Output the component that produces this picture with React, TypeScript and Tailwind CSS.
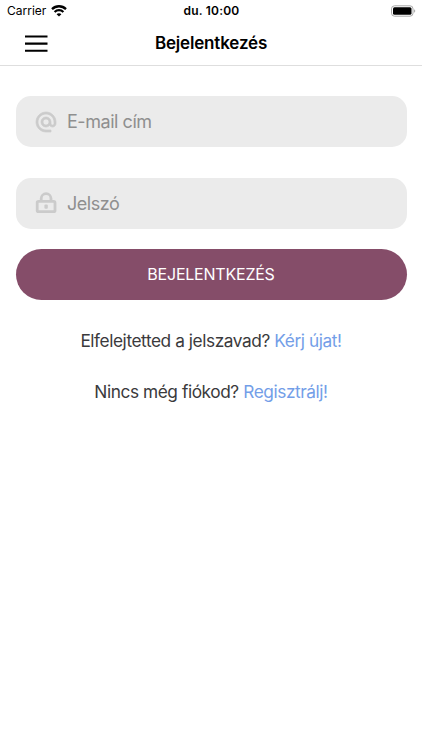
import type { ReactNode } from "react";

function StatusBar() {
  return (
    <div className="grid h-[22px] grid-cols-3 items-center pl-[7px] pr-[6px] text-[12px] leading-[22px]">
      <div className="flex items-center gap-[4.5px]">
        <span>Carrier</span>
        <svg width="16" height="12" viewBox="0 0 16 12" fill="none" stroke="black" strokeWidth="2.3">
          <path d="M1 4.1C4.9 .3 11.1 .3 15 4.1" />
          <path d="M3.6 7C6.1 4.6 9.9 4.6 12.4 7" />
          <path d="M8 11.6 5.6 9.2C6.9 8 9.1 8 10.4 9.2Z" fill="black" stroke="none" />
        </svg>
      </div>
      <span className="text-center font-semibold tracking-[0.2px]">du. 10:00</span>
      <svg className="justify-self-end" width="26" height="12" viewBox="0 0 26 12">
        <rect x="1.5" y="0.8" width="21.5" height="10.4" rx="3" fill="white" stroke="#a8a8a8" />
        <rect x="3" y="2.3" width="18.5" height="7.4" rx="1.5" fill="black" />
        <path d="M24.3 4.2v3.6c1.2-.6 1.2-3 0-3.6Z" fill="#8c8c8c" />
      </svg>
    </div>
  );
}

function Header() {
  return (
    <header className="grid h-11 grid-cols-[60px_1fr_60px] items-center border-b border-[#dedede]">
      <button className="ml-[24.7px]" aria-label="Menü">
        <svg width="23" height="18" viewBox="0 0 23 18" stroke="black" strokeWidth="2.1">
          <path d="M0 1.5h22.5M0 8.6h22.5M0 15.8h22.5" />
        </svg>
      </button>
      <h1 className="text-center text-[17px] font-semibold tracking-[-0.17px]">Bejelentkezés</h1>
    </header>
  );
}

function AtIcon() {
  return (
    <svg width="24" height="24" viewBox="0 0 24 24" fill="#cbcbcb" stroke="#cbcbcb" strokeWidth="0.7">
      <path d="M12 2C6.48 2 2 6.48 2 12s4.48 10 10 10h5v-2h-5c-4.34 0-8-3.66-8-8s3.66-8 8-8 8 3.66 8 8v1.43c0 .79-.71 1.57-1.5 1.57s-1.5-.78-1.5-1.57V12c0-2.76-2.24-5-5-5s-5 2.24-5 5 2.24 5 5 5c1.38 0 2.64-.56 3.54-1.47.65.89 1.77 1.47 2.96 1.47 1.97 0 3.5-1.6 3.5-3.57V12c0-5.52-4.48-10-10-10zm0 13c-1.66 0-3-1.34-3-3s1.34-3 3-3 3 1.34 3 3-1.34 3-3 3z" />
    </svg>
  );
}

function LockIcon() {
  return (
    <svg width="24" height="24" viewBox="0 0 24 24" fill="none" stroke="#cbcbcb" strokeWidth="2.8">
      <rect x="3.2" y="10.4" width="17.8" height="10.3" rx="1.3" />
      <path d="M7.2 10.4V7.6a4.9 4.9 0 0 1 9.8 0v2.8" />
      <rect x="10.4" y="13.4" width="3.4" height="4.4" rx="1" fill="#cbcbcb" stroke="none" />
    </svg>
  );
}

function Field({ icon, type, label }: { icon: ReactNode; type: string; label: string }) {
  return (
    <label className="flex h-[51px] items-center gap-[9px] rounded-[15px] bg-[#ebebeb] pl-[18.5px]">
      {icon}
      <input
        type={type}
        placeholder={label}
        className="min-w-0 flex-1 bg-transparent text-[18px] tracking-[-0.45px] text-[#333] outline-none placeholder:text-[#8f8f8f]"
      />
    </label>
  );
}

function Hint({ text, link }: { text: string; link: string }) {
  return (
    <p className="text-center text-[17.3px] leading-[26px] tracking-[-0.43px] text-[#3a3a3c]">
      {text} <a className="text-[#739ee8]">{link}</a>
    </p>
  );
}

export default function App() {
  return (
    <div className="min-h-[750px] bg-white font-[Inter,sans-serif] text-black">
      <StatusBar />
      <Header />
      <main className="flex flex-col px-[15.5px] pt-[30px]">
        <div className="flex flex-col gap-[30.5px]">
          <Field icon={<AtIcon />} type="email" label="E-mail cím" />
          <Field icon={<LockIcon />} type="password" label="Jelszó" />
        </div>
        <button className="mt-5 h-[51px] rounded-full bg-[#854d69] text-[16px] tracking-[-0.22px] text-white">
          BEJELENTKEZÉS
        </button>
        <div className="mt-7 flex flex-col gap-[25px]">
          <Hint text="Elfelejtetted a jelszavad?" link="Kérj újat!" />
          <Hint text="Nincs még fiókod?" link="Regisztrálj!" />
        </div>
      </main>
    </div>
  );
}
